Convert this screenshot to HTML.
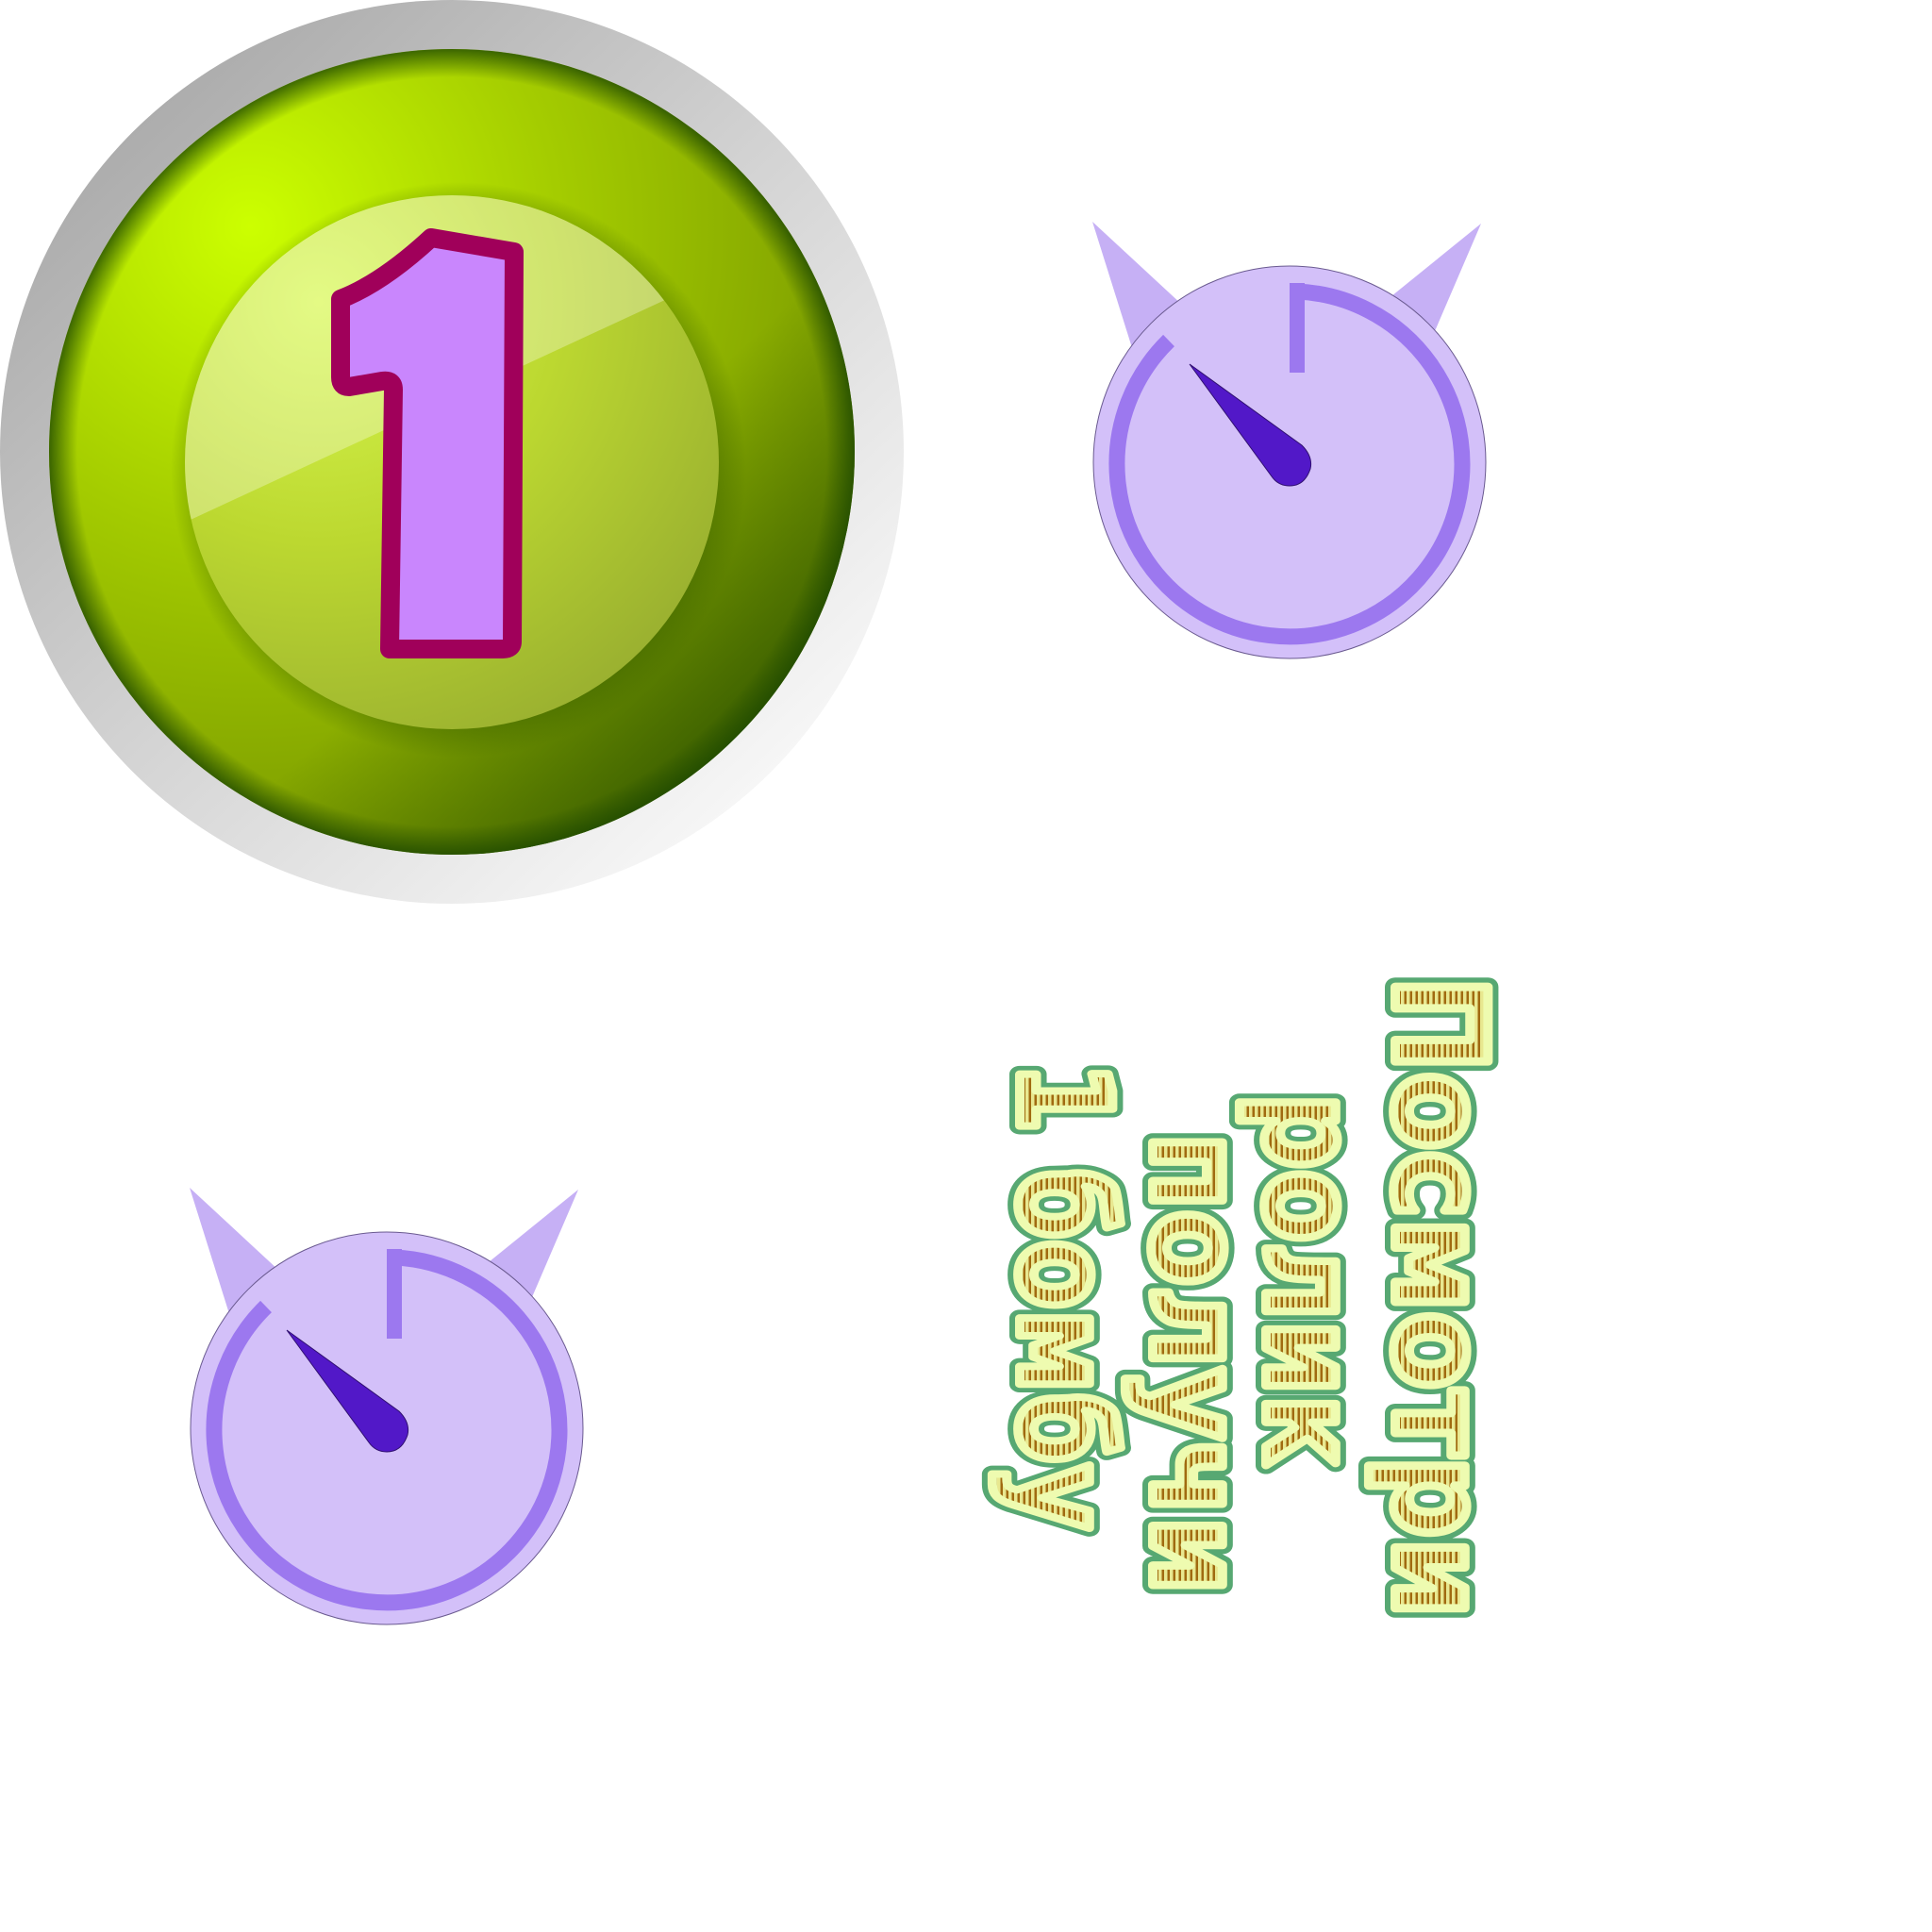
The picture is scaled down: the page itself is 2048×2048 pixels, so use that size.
<!DOCTYPE html>
<html><head><meta charset="utf-8"><style>html,body{margin:0;padding:0;background:#fff}svg{display:block}</style></head>
<body>
<svg width="2048" height="2048" viewBox="0 0 2048 2048" xmlns="http://www.w3.org/2000/svg">
<defs>
<linearGradient id="gray" x1="0.1" y1="0.1" x2="0.85" y2="0.9">
<stop offset="0" stop-color="#a8a8a8"/><stop offset="0.5" stop-color="#d2d2d2"/><stop offset="1" stop-color="#f8f8f8"/>
</linearGradient>
<radialGradient id="green" cx="0.25" cy="0.22" r="0.85">
<stop offset="0" stop-color="#ccff00"/><stop offset="0.45" stop-color="#a4cc00"/><stop offset="0.8" stop-color="#86a800"/><stop offset="1" stop-color="#7a9a00"/>
</radialGradient>
<radialGradient id="edge" cx="0.5" cy="0.5" r="0.5">
<stop offset="0.93" stop-color="#1f4a00" stop-opacity="0"/><stop offset="1" stop-color="#1f4a00" stop-opacity="0.8"/>
</radialGradient>
<linearGradient id="edge2" x1="0.2" y1="0.2" x2="0.85" y2="0.9">
<stop offset="0.6" stop-color="#0c3300" stop-opacity="0"/><stop offset="1" stop-color="#0c3300" stop-opacity="0.6"/>
</linearGradient>
<radialGradient id="inner" cx="0.25" cy="0.2" r="0.9">
<stop offset="0" stop-color="#d8f850"/><stop offset="0.5" stop-color="#bcd830"/><stop offset="1" stop-color="#9ab030"/>
</radialGradient>
<radialGradient id="shadow" cx="0.5" cy="0.5" r="0.5">
<stop offset="0.85" stop-color="#3a6000" stop-opacity="0.6"/><stop offset="1" stop-color="#3a6000" stop-opacity="0"/>
</radialGradient>
<clipPath id="ic"><circle cx="479" cy="490" r="283"/></clipPath>
<pattern id="hatch" width="6" height="6" patternUnits="userSpaceOnUse">
<rect width="6" height="6" fill="#e8e890"/><rect width="6" height="2.5" fill="#a06a10"/>
</pattern>
<g id="timer">
<polygon points="1158,235 1280,348 1202,375" fill="#c6b0f5"/>
<polygon points="1570,237 1470,318 1518,358" fill="#c6b0f5"/>
<circle cx="1367" cy="490" r="208" fill="#d3c0f9" stroke="#6a5a90" stroke-width="1"/>
<path d="M1375,309 A183,183 0 1 1 1239,361" fill="none" stroke="#9c78ef" stroke-width="17"/>
<rect x="1367" y="300" width="16" height="95" fill="#9c78ef"/>
<path d="M1261,386 L1380,472 Q1392,484 1389,497 Q1383,515 1367,515 Q1355,515 1348,505 Z" fill="#5218c8" stroke="#301070" stroke-width="1"/>
</g>
</defs>
<circle cx="479" cy="479" r="479" fill="url(#gray)"/>
<circle cx="479" cy="479" r="427" fill="url(#green)"/>
<circle cx="479" cy="479" r="427" fill="url(#edge2)"/>
<circle cx="479" cy="479" r="427" fill="url(#edge)"/>
<circle cx="486" cy="498" r="305" fill="url(#shadow)"/>
<circle cx="479" cy="490" r="283" fill="url(#inner)"/>
<g clip-path="url(#ic)">
<polygon points="150,575 720,311 720,150 150,150" fill="#ffffff" fill-opacity="0.3"/>
</g>
<path d="M457,252 L545,267 L543,680 Q543,688 533,688 L413,688 L417,413 Q417,402 405,404 L370,410 Q361,410 361,400 L361,317 Q405,300 457,252 Z" fill="#c986fd" stroke="#a0005a" stroke-width="20" stroke-linejoin="round"/>
<use href="#timer"/>
<use href="#timer" transform="translate(-957,1024)"/>
<g font-family="'DejaVu Sans','Liberation Sans',sans-serif" font-weight="bold" font-size="135">
<g transform="translate(1479,1035) rotate(90)">
<text textLength="680" lengthAdjust="spacingAndGlyphs" fill="#57a872" stroke="#57a872" stroke-width="22" stroke-linejoin="round">Посмотри</text>
<text textLength="680" lengthAdjust="spacingAndGlyphs" fill="url(#hatch)" stroke="#eefbb0" stroke-width="10" stroke-linejoin="round">Посмотри</text>
</g>
<g transform="translate(1342,1159) rotate(90)">
<text textLength="396" lengthAdjust="spacingAndGlyphs" fill="#57a872" stroke="#57a872" stroke-width="22" stroke-linejoin="round">ролик</text>
<text textLength="396" lengthAdjust="spacingAndGlyphs" fill="url(#hatch)" stroke="#eefbb0" stroke-width="10" stroke-linejoin="round">ролик</text>
</g>
<g transform="translate(1222,1201) rotate(90)">
<text textLength="489" lengthAdjust="spacingAndGlyphs" fill="#57a872" stroke="#57a872" stroke-width="22" stroke-linejoin="round">получи</text>
<text textLength="489" lengthAdjust="spacingAndGlyphs" fill="url(#hatch)" stroke="#eefbb0" stroke-width="10" stroke-linejoin="round">получи</text>
</g>
<g transform="translate(1081,1126) rotate(90)">
<text textLength="496" lengthAdjust="spacingAndGlyphs" fill="#57a872" stroke="#57a872" stroke-width="22" stroke-linejoin="round">1 бомбу</text>
<text textLength="496" lengthAdjust="spacingAndGlyphs" fill="url(#hatch)" stroke="#eefbb0" stroke-width="10" stroke-linejoin="round">1 бомбу</text>
</g>
</g>
</svg>
</body></html>
